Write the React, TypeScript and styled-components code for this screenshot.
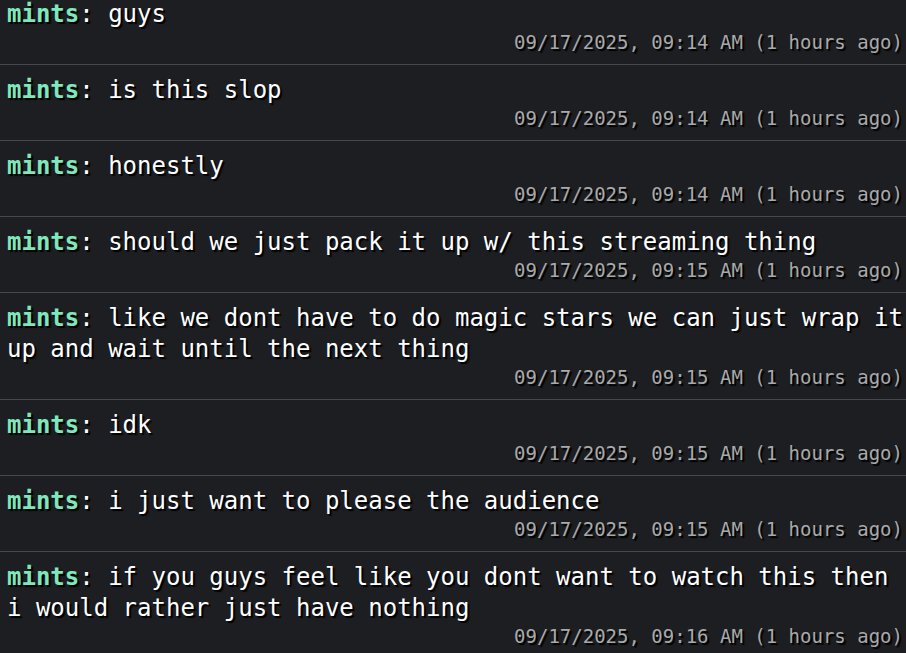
import React from "react";
import styled, { createGlobalStyle } from "styled-components";

const GlobalStyle = createGlobalStyle`
  html, body {
    margin: 0;
    padding: 0;
    background: #1c1e21;
  }
  body {
    font-family: "DejaVu Sans Mono", "Liberation Mono", monospace;
  }
`;

const Viewport = styled.div`
  width: 906px;
  height: 653px;
  overflow: hidden;
  background: #1c1e21;
`;

const List = styled.div`
  display: flex;
  flex-direction: column;
  margin-top: -11px;
`;

const Row = styled.div`
  display: flex;
  flex-direction: column;
  padding: 10px 3px 9px 7px;
  border-bottom: 1px solid #46484b;
`;

const Message = styled.div`
  font-size: 24px;
  line-height: 31px;
  color: #ffffff;
  text-shadow: 2px 2px 1px #000000;
  white-space: pre-wrap;
  word-break: normal;
`;

const Name = styled.span`
  color: #80e6bc;
  font-weight: bold;
`;

const Stamp = styled.div`
  align-self: flex-end;
  font-size: 19px;
  line-height: 25px;
  color: #a9a9a9;
  text-shadow: 2px 2px 1px #000000;
`;

const messages: { text: string; time: string }[] = [
  { text: "guys", time: "09/17/2025, 09:14 AM (1 hours ago)" },
  { text: "is this slop", time: "09/17/2025, 09:14 AM (1 hours ago)" },
  { text: "honestly", time: "09/17/2025, 09:14 AM (1 hours ago)" },
  { text: "should we just pack it up w/ this streaming thing", time: "09/17/2025, 09:15 AM (1 hours ago)" },
  { text: "like we dont have to do magic stars we can just wrap it up and wait until the next thing", time: "09/17/2025, 09:15 AM (1 hours ago)" },
  { text: "idk", time: "09/17/2025, 09:15 AM (1 hours ago)" },
  { text: "i just want to please the audience", time: "09/17/2025, 09:15 AM (1 hours ago)" },
  { text: "if you guys feel like you dont want to watch this then i would rather just have nothing", time: "09/17/2025, 09:16 AM (1 hours ago)" },
];

export default function App() {
  return (
    <>
      <GlobalStyle />
      <Viewport>
        <List>
          {messages.map((m, i) => (
            <Row key={i}>
              <Message>
                <Name>mints</Name>: {m.text}
              </Message>
              <Stamp>{m.time}</Stamp>
            </Row>
          ))}
        </List>
      </Viewport>
    </>
  );
}
